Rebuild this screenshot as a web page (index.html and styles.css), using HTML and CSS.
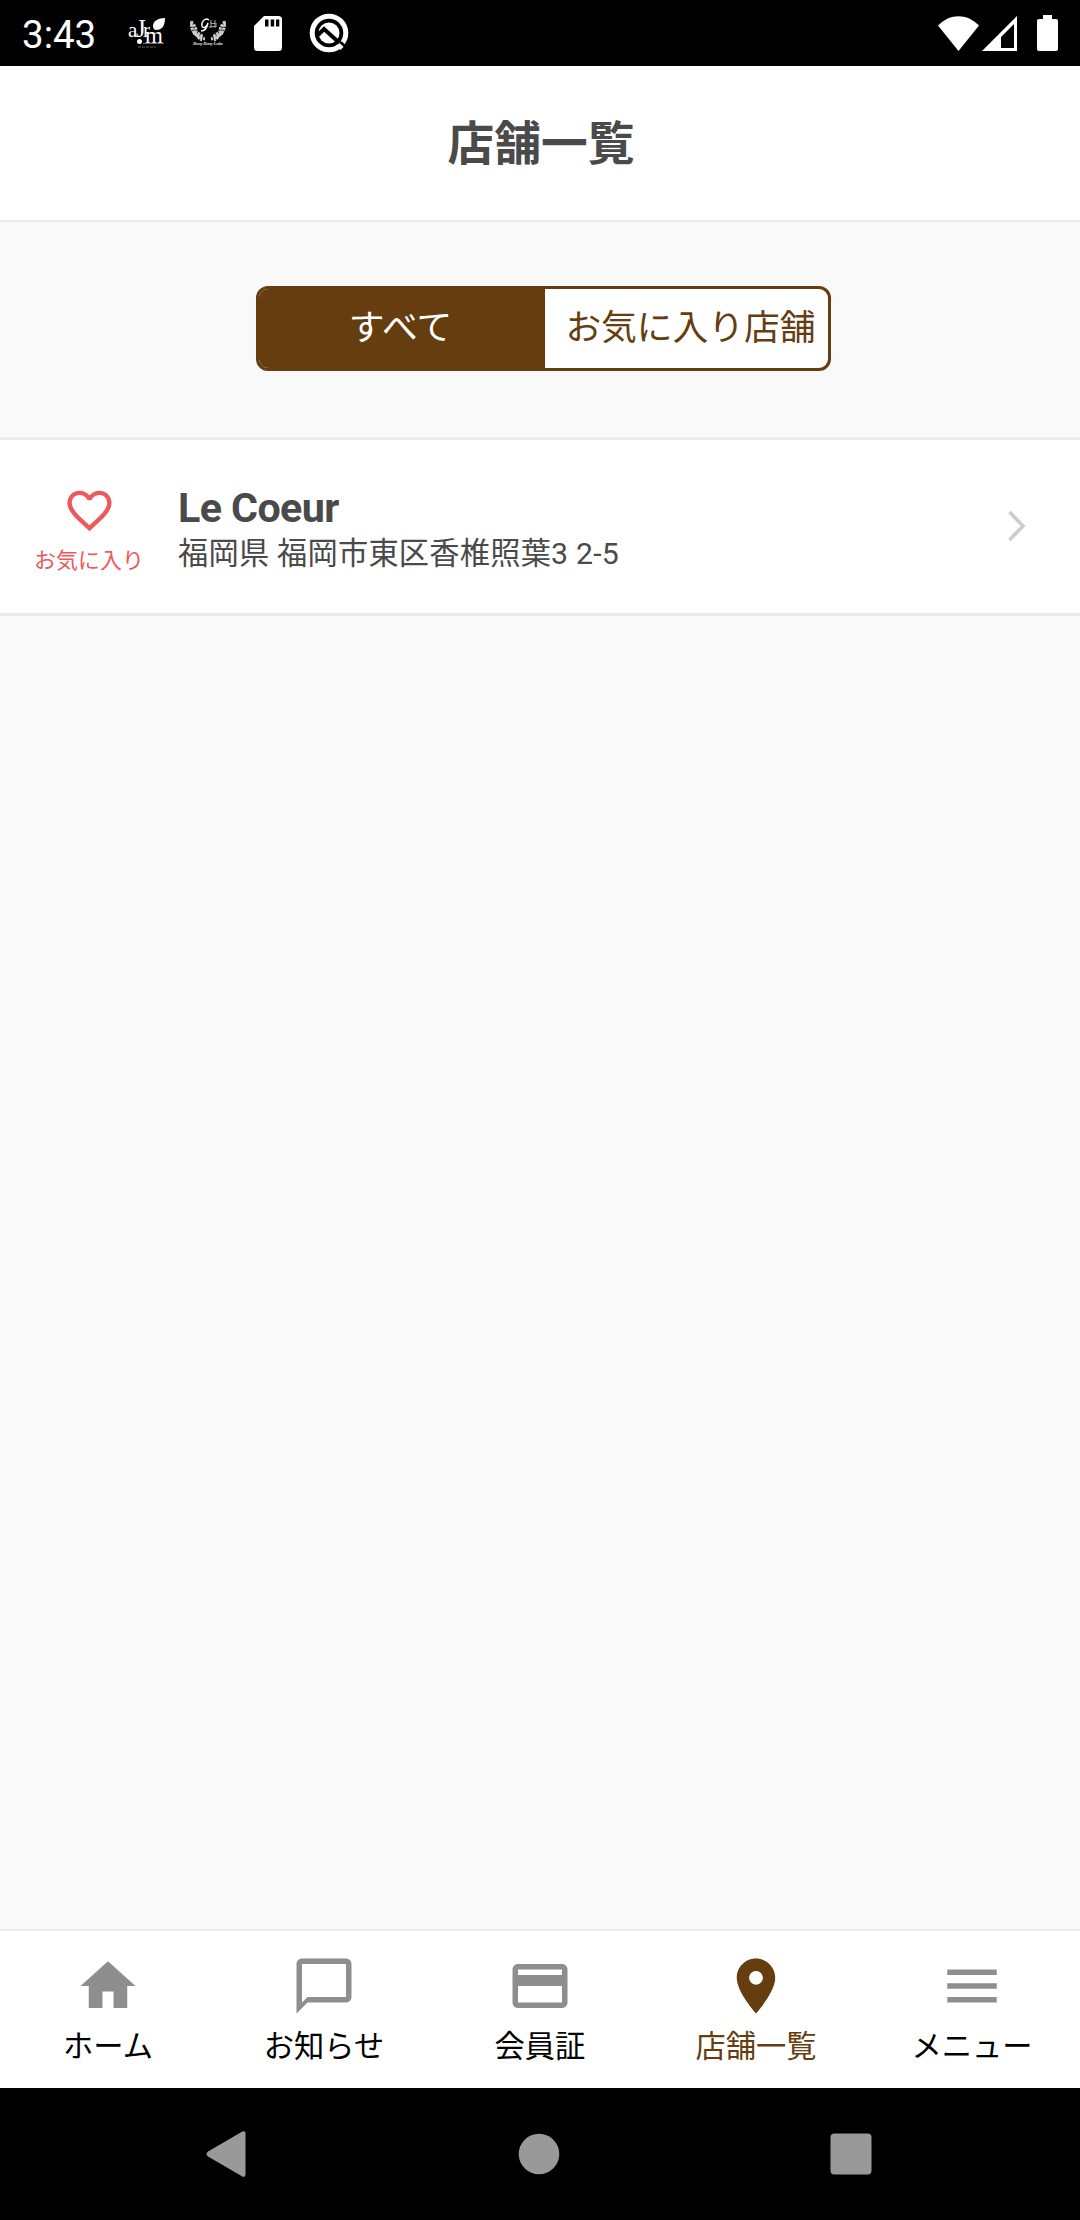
FILE: index.html
```html
<!DOCTYPE html>
<html lang="ja">
<head>
	<meta charset="utf-8">
	<meta name="viewport" content="width=device-width, initial-scale=1.0">
	<title>店舗一覧</title>
	<link rel="stylesheet" href="styles.css">
</head>
<body>
	<div class="statusbar">
		<span class="clock">3:43</span>
		<div class="notifications">
			<svg class="logo" width="38" height="34" viewBox="0 0 38 34">
				<text y="21" fill="#fff" font-family="Liberation Serif" font-size="21"><tspan x="0">a</tspan><tspan x="8" font-size="25">J</tspan><tspan x="15">r</tspan></text>
				<text x="17" y="27" fill="#fff" font-family="Liberation Serif" font-size="23">m</text>
				<path fill="#fff" d="M37 2c-7 0-12 3-12 8 0 2 1 4 3 4 5 0 9-3 9-12z"/>
				<circle cx="11.500" cy="25.500" r="2.500" fill="#fff"/>
				<path stroke="#666" d="M10 31h18" stroke-dasharray="3 1"/>
				<path stroke="#999" stroke-width=".7" d="M15 27.500h21"/>
			</svg>
			<svg class="logo" width="38" height="34" viewBox="0 0 38 34">
				<g fill="none" stroke="#ccc" stroke-width="3" stroke-dasharray="2.500 .8">
					<path d="M3 5c-2 10 4 16 13 18M35 5c2 10-4 16-13 18"/>
					<path d="M1 8c5 0 6 4 6 7s5 2 6 6M37 8c-5 0-6 4-6 7s-5 2-6 6"/>
					<path d="M4 17c4 0 5 6 9 7M34 17c-4 0-5 6-9 7"/>
				</g>
				<path fill="none" stroke="#fff" stroke-width="1.400" d="M20 4c-4-3-8 2-7 6 1 3 5 1 6-3-1 5-3 8-7 8"/>
				<path stroke="#aaa" d="M21 7l7 1M20 11l8-1M22 4v8M26 4v8"/>
				<text x="4" y="29" fill="#ddd" font-family="Liberation Serif" font-style="italic" font-weight="bold" font-size="5" textLength="30">Bony Bony Luke</text>
			</svg>
			<svg class="sd" width="28" height="35" viewBox="0 0 28 35">
				<path fill="#fff" d="M10 0h14.500A3.500 3.500 0 0 1 28 3.500v28a3.500 3.500 0 0 1-3.500 3.500h-21A3.500 3.500 0 0 1 0 31.500V10z"/>
				<path d="M11 3.500h3.500v7H11zM16.700 3.500h3.500v7h-3.500zM22 3.500h3.300v7H22z"/>
			</svg>
			<svg class="qlogo" width="40" height="40" viewBox="0 0 40 40">
				<circle cx="20" cy="20" r="16.800" fill="none" stroke="#fff" stroke-width="5"/>
				<circle cx="20" cy="20" r="10.500" fill="#fff"/>
				<path fill="none" stroke="#000" stroke-width="4" d="M9 22l6-6 20 18"/>
				<path fill="none" stroke="#fff" stroke-width="4.500" d="M29 31.500l4 4"/>
				<path fill="none" stroke="#000" stroke-width="2" d="M32 29l5 5"/>
			</svg>
		</div>
		<div class="system">
			<svg width="41" height="35" viewBox="0 0 41 35"><path fill="#fff" d="M0 9.500C12-3 29-3 41 9.500L20.500 35z"/></svg>
			<svg class="signal" width="35" height="35" viewBox="0 0 35 35"><path fill="#fff" fill-rule="evenodd" d="M35 0v35H0zM32 8L19 21v11h13z"/></svg>
			<svg class="battery" width="21" height="36" viewBox="0 0 21 36"><path fill="#fff" d="M6 0h9v4h4a2 2 0 0 1 2 2v28a2 2 0 0 1-2 2H2a2 2 0 0 1-2-2V6a2 2 0 0 1 2-2h4z"/></svg>
		</div>
	</div>

	<header class="header">
		<h1>店舗一覧</h1>
	</header>

	<main class="content">
		<div class="filter">
			<div class="segment">
				<a class="segment-item selected">すべて</a>
				<a class="segment-item">お気に入り店舗</a>
			</div>
		</div>

		<div class="shop">
			<div class="favorite">
				<svg width="53" height="53" viewBox="0 0 24 24"><path fill="currentColor" d="M16.5 3c-1.740 0-3.410.81-4.500 2.090C10.910 3.810 9.240 3 7.500 3 4.420 3 2 5.420 2 8.500c0 3.780 3.400 6.860 8.550 11.540L12 21.350l1.450-1.320C18.600 15.360 22 12.280 22 8.500 22 5.420 19.580 3 16.500 3zm-4.400 15.550l-.1.100-.1-.1C7.140 14.240 4 11.390 4 8.500 4 6.500 5.500 5 7.500 5c1.540 0 3.040.99 3.570 2.360h1.870C13.460 5.990 14.960 5 16.500 5c2 0 3.500 1.500 3.500 3.500 0 2.890-3.140 5.740-7.900 10.050z"/></svg>
				<span>お気に入り</span>
			</div>
			<div class="shop-info">
				<div class="name">Le Coeur</div>
				<div class="address">福岡県 福岡市東区香椎照葉3 2-5</div>
			</div>
			<svg class="chevron" width="18" height="32" viewBox="0 0 18 32"><path fill="none" stroke="#ccc" stroke-width="3.600" d="M1.500 2l13.500 14L1.500 30"/></svg>
		</div>
	</main>

	<nav class="tabbar">
		<a class="tab">
			<svg viewBox="0 0 24 24"><path d="M10 20v-6h4v6h5v-8h3L12 3 2 12h3v8z"/></svg>
			<span>ホーム</span>
		</a>
		<a class="tab">
			<svg viewBox="0 0 24 24"><path d="M20 2H4c-1.100 0-2 .9-2 2v18l4-4h14c1.100 0 2-.9 2-2V4c0-1.100-.9-2-2-2zm0 14H6l-2 2V4h16v12z"/></svg>
			<span>お知らせ</span>
		</a>
		<a class="tab">
			<svg viewBox="0 0 24 24"><path d="M20 4H4c-1.110 0-1.990.89-1.990 2L2 18c0 1.110.89 2 2 2h16c1.110 0 2-.89 2-2V6c0-1.110-.89-2-2-2zm0 14H4v-6h16v6zm0-10H4V6h16v2z"/></svg>
			<span>会員証</span>
		</a>
		<a class="tab active">
			<svg viewBox="0 0 24 24"><path d="M12 2C8.130 2 5 5.130 5 9c0 5.250 7 13 7 13s7-7.750 7-13c0-3.870-3.130-7-7-7zm0 9.500c-1.380 0-2.500-1.120-2.500-2.500s1.120-2.500 2.500-2.500 2.500 1.120 2.500 2.500-1.120 2.500-2.500 2.500z"/></svg>
			<span>店舗一覧</span>
		</a>
		<a class="tab">
			<svg viewBox="0 0 24 24"><path d="M3 18h18v-2H3v2zm0-5h18v-2H3v2zm0-7v2h18V6H3z"/></svg>
			<span>メニュー</span>
		</a>
	</nav>

	<div class="navbar">
		<svg width="42" height="46" viewBox="0 0 42 46"><path d="M36.500 1c2-1.500 4-1 4 1.500v41c0 2.500-2 3-4 1.500L3 25.500c-2-1.500-2-3.500 0-5z"/></svg>
		<svg width="42" height="42" viewBox="0 0 42 42"><circle cx="21" cy="21" r="20.300"/></svg>
		<svg width="42" height="42" viewBox="0 0 42 42"><rect x=".5" y=".5" width="41" height="41" rx="4"/></svg>
	</div>
</body>
</html>
```
FILE: styles.css
```css
:root {
	--brand: #663d0f;
	--text: #4a4a4a;
	--line: #ebebeb;
	--bg: #f9f9f9;
	--pink: #ec5a5c;
	--white: #fff;
}

* { box-sizing: border-box; }

body {
	background: var(--bg);
	color: var(--text);
	display: flex;
	flex-direction: column;
	font-family: Roboto, "Noto Sans CJK JP", sans-serif;
	height: 2220px;
	margin: 0;
	width: 1080px;
}

svg {
	display: block;
	flex-shrink: 0;
}

.statusbar {
	align-items: center;
	background: #000;
	color: var(--white);
	display: flex;
	height: 66px;
	padding: 0 22px 0 22px;
}

.clock {
	font-size: 38.5px;
	line-height: 66px;
	padding-top: 3px;
	width: 106px;
}

.notifications {
	align-items: center;
	display: flex;
}

.logo { margin-right: 23px; }

.sd { margin: 0 27px 0 4px; }

.system {
	align-items: center;
	display: flex;
	margin-left: auto;
}

.signal { margin: 0 20px 0 3px; }

.header {
	align-items: center;
	background: var(--white);
	border-bottom: 2px solid var(--line);
	display: flex;
	height: 156px;
	justify-content: center;
	padding: 2px 0 0 2px;
}

.header h1 {
	font-size: 46.75px;
	line-height: 60px;
	margin: 0;
}

.content { flex: 1; }

.filter {
	display: flex;
	height: 215px;
	padding: 64px 0 0 256px;
}

.segment {
	background: var(--white);
	border: 3px solid var(--brand);
	border-radius: 12px;
	display: flex;
	height: 85px;
	overflow: hidden;
	width: 575px;
}

.segment-item {
	color: var(--brand);
	flex: 1;
	font-size: 35.75px;
	line-height: 78px;
	padding-left: 8px;
	text-align: center;
	white-space: nowrap;
}

.segment-item.selected {
	background: var(--brand);
	color: var(--white);
	flex: 0 0 286px;
	padding-left: 0;
	padding-right: 3px;
}

.shop {
	align-items: center;
	background: var(--white);
	border-bottom: 3px solid var(--line);
	border-top: 3px solid var(--line);
	display: flex;
	height: 179px;
	padding-right: 54px;
}

.favorite {
	align-items: center;
	color: var(--pink);
	display: flex;
	flex-direction: column;
	font-size: 22px;
	line-height: 32px;
	padding-top: 8px;
	width: 178px;
}

.favorite span { padding-top: 8px; }

.shop-info {
	flex: 1;
	padding-top: 7px;
}

.name {
	font-size: 41.25px;
	font-weight: bold;
	letter-spacing: -.6px;
	line-height: 48px;
}

.address {
	font-size: 30.25px;
	letter-spacing: .2px;
	line-height: 44px;
}

.chevron { margin-bottom: 1px; }

.tabbar {
	background: var(--white);
	border-top: 2px solid var(--line);
	display: flex;
	height: 159px;
}

.tab {
	align-items: center;
	color: #000;
	display: flex;
	flex: 1;
	flex-direction: column;
	font-size: 30.25px;
	line-height: 44px;
	padding-top: 22px;
}

.tab svg {
	fill: #8e8e8e;
	height: 66px;
	margin-bottom: 6px;
	width: 66px;
}

.tab.active { color: var(--brand); }

.tab.active svg { fill: var(--brand); }

.navbar {
	align-items: center;
	background: #000;
	display: flex;
	fill: #999;
	height: 132px;
	justify-content: space-between;
	padding: 0 208px 0 205px;
}
```
